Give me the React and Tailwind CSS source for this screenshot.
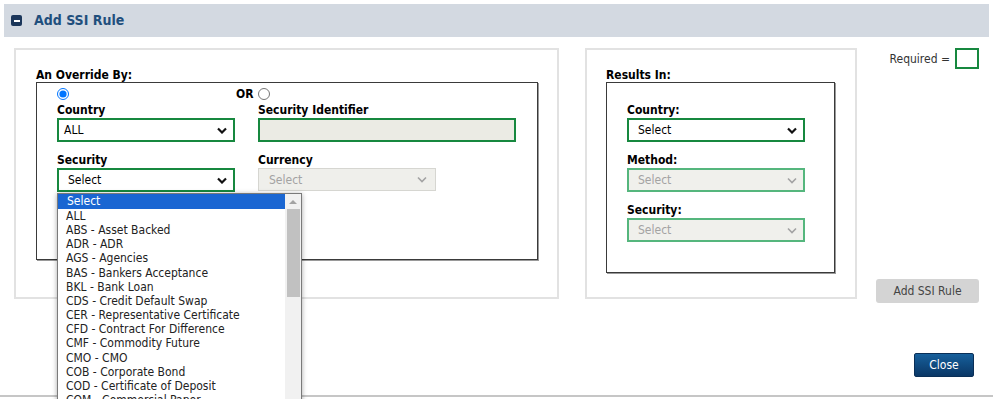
import React from 'react'

const securities = [
  'ALL',
  'ABS - Asset Backed',
  'ADR - ADR',
  'AGS - Agencies',
  'BAS - Bankers Acceptance',
  'BKL - Bank Loan',
  'CDS - Credit Default Swap',
  'CER - Representative Certificate',
  'CFD - Contract For Difference',
  'CMF - Commodity Future',
  'CMO - CMO',
  'COB - Corporate Bond',
  'COD - Certificate of Deposit',
  'COM - Commercial Paper',
  'CON - Convertible',
]

function Chevron({ disabled }) {
  return (
    <svg width="10" height="7" viewBox="0 0 10 7" className="shrink-0">
      <polyline
        points="1,1.5 5,5.5 9,1.5"
        fill="none"
        stroke={disabled ? '#a3a3a3' : '#111'}
        strokeWidth={disabled ? 1.6 : 2.2}
      />
    </svg>
  )
}

// green = required field, faded = required but disabled
function SelectBox({ value, variant = 'green', pad = 'pl-[9px]' }) {
  if (variant === 'disabled') {
    return (
      <div className="flex h-[23px] w-[178px] items-center justify-between border border-[#d6d6d1] bg-[#efefeb] pl-[10px] pr-[8px] text-[12px] text-[#a3a3a3]">
        <span>{value}</span>
        <Chevron disabled />
      </div>
    )
  }
  if (variant === 'faded') {
    return (
      <div className="flex h-[24px] w-[178px] items-center justify-between border-2 border-[#55b67d] bg-[#f0f0ec] pl-[9px] pr-[6px] text-[12px] text-[#a3a3a3]">
        <span>{value}</span>
        <Chevron disabled />
      </div>
    )
  }
  return (
    <div className={`flex h-[24px] w-[178px] items-center justify-between border-2 border-[#17883f] bg-white ${pad} pr-[6px] text-[12px] text-black`}>
      <span>{value}</span>
      <Chevron />
    </div>
  )
}

function Label({ children }) {
  return <div className="text-[12px] font-bold leading-[15px] text-black">{children}</div>
}

export default function App() {
  return (
    <div className="relative h-[399px] w-[993px] overflow-hidden bg-white font-['DejaVu_Sans_Condensed','DejaVu_Sans',sans-serif] text-[11px] text-black">
      {/* Header */}
      <div className="px-[4px] pt-[4px]">
        <div className="flex h-[33px] items-center bg-[#d3d9e1] pl-[7px]">
          <span className="flex h-[11px] w-[11px] items-center justify-center rounded-[2px] bg-[#1b365a]">
            <span className="h-[2px] w-[6px] bg-white" />
          </span>
          <span className="ml-[12px] text-[14px] font-bold text-[#1f4f7d]">Add SSI Rule</span>
        </div>
      </div>

      {/* Main row */}
      <div className="flex pl-[14px] pt-[11px]">
        {/* Override box */}
        <div className="h-[251px] w-[545px] border-2 border-[#e2e2e2] pl-[20px] pt-[18px]">
          <div className="text-[12px] font-bold leading-[14px]">An Override By:</div>
          <div className="h-[178px] w-[502px] border border-[#3a3a3a] pl-[20px] pt-[5px] shadow-[1px_1px_0_#9a9a9a]">
            <div className="flex h-[12px] items-center">
              <div className="w-[179px]">
                <input type="radio" name="by" defaultChecked className="block h-[12px] w-[12px]" />
              </div>
              <span className="w-[22px] text-[12px] font-bold">OR</span>
              <input type="radio" name="by" className="block h-[12px] w-[12px]" />
            </div>

            <div className="mt-[3px] flex">
              <div className="w-[201px]">
                <Label>Country</Label>
                <SelectBox value="ALL" pad="pl-[5px]" />
              </div>
              <div>
                <Label>Security Identifier</Label>
                <div className="h-[24px] w-[258px] border-2 border-[#17883f] bg-[#ebebe4]" />
              </div>
            </div>

            <div className="mt-[11px] flex">
              <div className="w-[201px]">
                <Label>Security</Label>
                <SelectBox value="Select" />
              </div>
              <div>
                <Label>Currency</Label>
                <SelectBox value="Select" variant="disabled" />
              </div>
            </div>
          </div>
        </div>

        {/* Results box */}
        <div className="ml-[26px] h-[251px] w-[272px] border-2 border-[#e2e2e2] pl-[19px] pt-[18px]">
          <div className="text-[12px] font-bold leading-[14px]">Results In:</div>
          <div className="h-[191px] w-[229px] border border-[#3a3a3a] pl-[20px] pt-[20px] shadow-[1px_1px_0_#9a9a9a]">
            <Label>Country:</Label>
            <SelectBox value="Select" />
            <div className="mt-[11px]">
              <Label>Method:</Label>
              <SelectBox value="Select" variant="faded" />
            </div>
            <div className="mt-[11px]">
              <Label>Security:</Label>
              <SelectBox value="Select" variant="faded" />
            </div>
          </div>
        </div>

        {/* Right column */}
        <div className="flex flex-1 flex-col items-end pr-[14px]">
          <div className="flex items-center">
            <span className="text-[12px] text-[#333]">Required =</span>
            <span className="ml-[5px] h-[21px] w-[24px] border-2 border-[#17883f] bg-white" />
          </div>
          <button className="mt-[210px] h-[24px] w-[103px] rounded-[3px] bg-[#d4d4d4] text-[12px] text-[#444]">
            Add SSI Rule
          </button>
        </div>
      </div>

      <div className="mt-[50px] flex justify-end pr-[19px]">
        <button className="h-[24px] w-[60px] rounded-[2px] border border-[#0a2f57] bg-gradient-to-b from-[#17609c] to-[#0a3766] text-[12px] text-white">
          Close
        </button>
      </div>

      <div className="mt-[18px] h-[2px] bg-[#c6c6c6]" />

      {/* Open Security dropdown */}
      <div className="absolute left-[57px] top-[193px] z-10 flex h-[260px] w-[245px] border border-[#7a7a7a] bg-white shadow-[0_1px_5px_rgba(0,0,0,0.35)]">
        <div className="flex-1 text-[12px] leading-[14.15px] text-[#222]">
          <div className="h-[15px] bg-[#1a66d2] pl-[9px] leading-[15px] text-white">Select</div>
          {securities.map((s) => (
            <div key={s} className="whitespace-nowrap pl-[8px]">
              {s}
            </div>
          ))}
        </div>
        <div className="flex w-[16px] flex-col items-center bg-[#f1f1f1]">
          <svg width="8" height="5" viewBox="0 0 8 5" className="mt-[5px]">
            <polygon points="0,5 4,1 8,5" fill="#a3a3a3" />
          </svg>
          <div className="mt-[5px] h-[88px] w-[13px] bg-[#c1c1c1]" />
        </div>
      </div>
    </div>
  )
}
